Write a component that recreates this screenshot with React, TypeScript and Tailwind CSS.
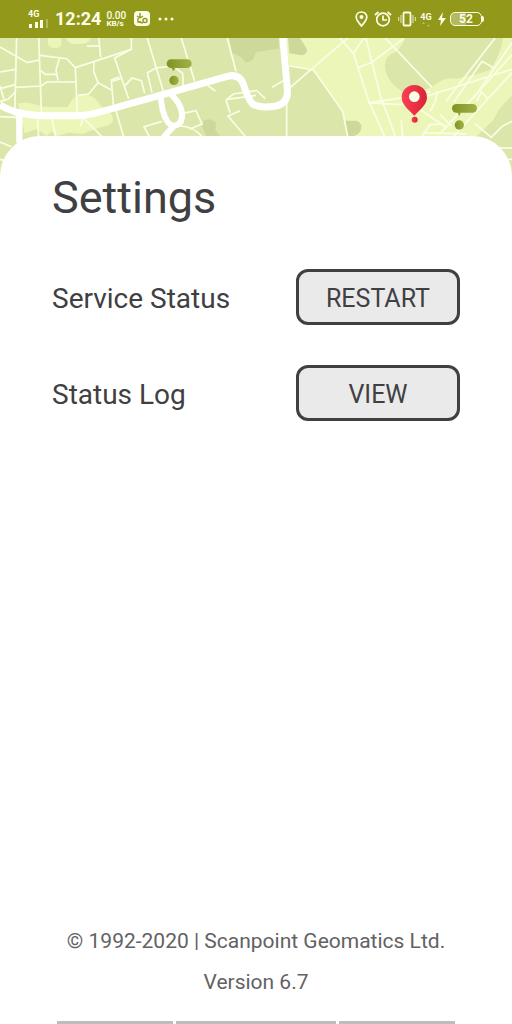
const MINOR_ROADS = [
  'M0 33 L82 80 L118 72', 'M50 0 L44 240', 'M116 0 L124 228', 'M0 108 L46 100', 'M48 154 L124 150 L140 138 L226 138',
  'M0 158 L46 146', 'M0 196 L24 190 L46 168', 'M0 150 L12 190', 'M120 58 L200 68 L226 95 L232 232', 'M178 68 L168 102 L174 134',
  'M122 104 L136 115 L168 115', 'M226 95 L394 40', 'M296 0 L302 64', 'M260 30 L298 30', 'M394 0 V40 L344 66 L386 188',
  'M282 76 L281 106 L294 140 L334 162', 'M294 140 L266 174 L234 178', 'M358 122 L334 132 L340 206', 'M336 136 L362 128',
  'M376 148 L396 126 L424 134 L434 172', 'M440 0 L490 166', 'M456 170 L442 110 L468 96 L520 90 L548 112 L550 150',
  'M542 0 L584 136', 'M620 146 L646 165', 'M680 0 L708 106', 'M0 242 L50 244', 'M112 238 L116 306', 'M154 240 L168 306',
  'M244 240 L310 306', 'M242 270 L248 246', 'M346 218 L372 306', 'M450 306 L432 272 L486 256', 'M550 232 L588 224 L606 264 L568 280',
  'M540 270 Q580 270 608 304', 'M0 318 L34 332', 'M0 370 L16 374', 'M768 164 L700 174 L678 192 L690 230',
  'M682 190 L768 178', 'M720 224 L684 240 L740 306', 'M768 162 L796 188', 'M816 154 L850 134', 'M864 160 L1050 0',
  'M868 90 L940 102', 'M940 102 L1028 226 L1044 306', 'M860 200 L860 306', 'M1014 0 L1060 52 L1092 6', 'M1060 52 L1106 194 L1156 306',
  'M1096 0 L1142 182 L1188 306', 'M1076 94 L1114 80 L1210 8', 'M1104 200 L1200 206 L1536 100', 'M1150 0 L1296 154',
  'M1110 200 L1230 182 L1290 166', 'M1204 254 L1208 306', 'M1260 220 L1340 276', 'M1262 306 L1290 266 L1330 264',
  'M1290 226 L1306 196 L1312 166', 'M1338 196 L1490 0', 'M1362 198 L1446 76 L1486 98', 'M1420 188 L1536 20', 'M1318 296 L1536 56',
  'M1356 306 L1536 110', 'M1430 196 L1444 168 L1462 186', 'M1270 290 L1400 294', 'M1424 262 L1474 304 L1508 270 L1536 256',
  'M1320 236 L1354 270', 'M1490 336 H1536', 'M1520 370 H1536',
];

const MAJOR_ROADS = [
  { d: 'M0 207 Q50 239 140 239 H228 Q260 239 300 228 L480 178 L682 121 Q718 112 730 144 Q744 190 758 204 Q780 218 828 210 Q866 202 862 160 L848 0', width: 21 },
  { d: 'M58 228 V320', width: 19 },
  { d: 'M482 174 Q484 230 502 256 Q520 282 542 258 Q554 230 532 196 L510 170 M520 272 L490 304', width: 18 },
];

function MapBanner() {
  return (
    <svg className="block h-[148px] w-full" viewBox="0 6 1536 444" preserveAspectRatio="xMidYMin slice" aria-hidden="true">
      <defs>
        <linearGradient id="olive">
          <stop offset="0" stopColor="#829126" />
          <stop offset="1" stopColor="#a1b245" />
        </linearGradient>
        <linearGradient id="red">
          <stop offset="0" stopColor="#fb4052" />
          <stop offset="1" stopColor="#da2438" />
        </linearGradient>
      </defs>
      <rect width="1536" height="450" fill="#dbe6aa" />
      <g fill="#edf6b9">
        <path d="M144 0 H184 V26 Q180 36 164 36 Q148 36 144 24Z" />
        <path d="M196 0 H274 Q270 24 240 24 H222 Q200 22 196 0Z" />
        <path d="M54 202 Q90 196 126 212 L202 214 Q218 180 242 176 Q276 174 292 194 Q310 224 332 232 Q348 252 328 268 Q280 278 248 294 L206 290 L170 300 L154 286 L140 300 L110 278 L74 292Z" />
        <path d="M856 0 H1536 V180 Q1496 214 1480 252 L1420 310 H1044 L1028 226 L940 102 L868 90Z" />
      </g>
      <path d="M1216 6 H1510 Q1500 60 1470 102 Q1410 122 1370 128 Q1330 120 1296 154 Q1250 170 1204 164 Q1164 140 1156 102 Q1150 68 1174 54 Q1200 46 1216 6Z" fill="#dbe6aa" />
      <g fill="#ccd99b">
        <path d="M688 6 H836 V38 L768 48 L758 72 L738 80 L722 62 L696 50Z" />
        <path d="M864 6 H900 L920 38 Q924 54 906 58 L868 52Z" />
        <path d="M1036 254 H1070 Q1090 262 1082 284 Q1070 304 1042 300Z" />
        <path d="M606 274 L612 252 L632 250 L648 260 L646 282 L660 300 H620Z" />
      </g>
      <g fill="none" stroke="#fbfee6" strokeWidth="5">
        {MINOR_ROADS.map(d => <path key={d} d={d} />)}
      </g>
      <g fill="none" stroke="#fff" strokeLinejoin="round">
        {MAJOR_ROADS.map(r => <path key={r.d} d={r.d} strokeWidth={r.width} />)}
      </g>
      <g fill="url(#olive)">
        <rect x="500" y="70" width="75" height="26" rx="13" />
        <path d="M514 94 L520 106 L528 94Z" />
        <circle cx="522" cy="133" r="14" />
        <rect x="1356" y="204" width="75" height="26" rx="13" />
        <path d="M1373 228 L1377 241 L1384 228Z" />
        <circle cx="1378" cy="267" r="14" />
      </g>
      <circle cx="1243" cy="182" r="18" fill="#fbfee6" />
      <g fill="url(#red)">
        <path fillRule="evenodd" d="M1243 147 C1220 147 1205 164 1205 184 C1205 207 1226 221 1243 239 C1260 221 1281 207 1281 184 C1281 164 1266 147 1243 147Z M1243 166 A16 16 0 1 1 1243 198 A16 16 0 1 1 1243 166Z" />
        <circle cx="1244" cy="251" r="9" />
      </g>
    </svg>
  );
}

function StatusBar() {
  return (
    <header className="flex h-[38px] items-center justify-between bg-[#92991a] px-7 text-[#fdffe8]">
      <div className="flex items-center">
        <div className="flex w-5 flex-col">
          <span className="text-[9px] leading-[9px] font-bold">4G</span>
          <svg width="20" height="9" viewBox="0 0 20 9" fill="currentColor" aria-hidden="true">
            <path d="M1 5h3v4H1zM7 3h3v6H7zM12 1h3v8h-3z" />
            <path d="M18 0h2v9h-2z" opacity=".3" />
          </svg>
        </div>
        <span className="ml-[7px] text-[18px] leading-5 font-bold">12:24</span>
        <div className="ml-[5px] flex w-5 flex-col font-medium">
          <span className="text-[10px] leading-[9px]">0.00</span>
          <span className="text-[8px] leading-[8px] font-bold">KB/s</span>
        </div>
        <svg className="ml-2" width="16" height="16" viewBox="0 0 16 16" aria-hidden="true">
          <rect width="16" height="15" rx="4" fill="currentColor" />
          <g fill="none" stroke="#92991a" strokeWidth="1.4">
            <path d="M6 2v4M3 5l3 2 3-2M4 7v4h3" />
            <circle cx="11" cy="9.5" r="2" />
            <path d="M5 11l4 1" />
          </g>
        </svg>
        <svg className="ml-2" width="16" height="4" viewBox="0 0 16 4" fill="currentColor" aria-hidden="true">
          <circle cx="2" cy="2" r="1.5" /><circle cx="8" cy="2" r="1.5" /><circle cx="14" cy="2" r="1.5" />
        </svg>
      </div>
      <div className="flex items-center">
        <svg width="13" height="16" viewBox="0 0 13 16" aria-hidden="true">
          <path d="M6.5 1C3.5 1 1.2 3.2 1.2 6c0 3.5 3.3 6.2 5.3 9 2-2.8 5.3-5.5 5.3-9 0-2.8-2.3-5-5.3-5Z" fill="none" stroke="currentColor" strokeWidth="1.7" />
          <circle cx="6.5" cy="6" r="2" fill="currentColor" />
        </svg>
        <svg className="ml-1.5" width="18" height="16" viewBox="0 0 18 16" fill="none" stroke="currentColor" strokeWidth="1.7" aria-hidden="true">
          <circle cx="9" cy="8.5" r="6.3" />
          <path d="M9 4.5V9h4M1 4l3.5-3M17 4l-3.5-3" />
        </svg>
        <svg className="ml-1.5" width="18" height="16" viewBox="0 0 18 16" fill="none" stroke="currentColor" aria-hidden="true">
          <rect x="5.5" y="1.5" width="7" height="13" rx="1" strokeWidth="1.8" />
          <path d="M3 4v8M.7 6v4M15 4v8M17.3 6v4" opacity=".8" />
        </svg>
        <div className="ml-1 flex w-3 flex-col items-center">
          <span className="text-[9px] leading-[10px] font-bold">4G</span>
          <svg width="8" height="5" viewBox="0 0 8 5" fill="currentColor" opacity=".4" aria-hidden="true">
            <path d="M0 2l1.500-2L3 2zM5 3h3L6.500 5z" />
          </svg>
        </div>
        <svg className="ml-1.5" width="8" height="14" viewBox="0 0 8 14" fill="currentColor" aria-hidden="true">
          <path d="M5 0 0 8h3l-1 6 6-8H4z" />
        </svg>
        <div className="ml-1 flex items-center">
          <span className="flex h-[14px] w-8 items-center justify-center rounded-[5px] border border-current bg-linear-to-r from-[#b3b95c] from-50% to-transparent to-50% text-[12px] leading-3 font-bold">
            52
          </span>
          <span className="h-1.5 w-0.5 rounded-r bg-current" />
        </div>
      </div>
    </header>
  );
}

const ROWS = [
  { id: 'service-status', label: 'Service Status', action: 'RESTART' },
  { id: 'status-log', label: 'Status Log', action: 'VIEW' },
];

export default function App() {
  return (
    <div className="flex min-h-screen flex-col overflow-hidden bg-white font-[Roboto,sans-serif] text-[#404042]">
      <StatusBar />
      <MapBanner />
      <main className="relative -mt-[50px] flex flex-1 flex-col rounded-t-[40px] bg-white pt-9">
        <h1 className="px-[52px] text-[45px] leading-[52px]">Settings</h1>
        <div className="mt-[45px] flex flex-col gap-10 px-[52px]">
          {ROWS.map(row => (
            <div key={row.id} className="flex items-center justify-between">
              <span id={row.id} className="pt-1 text-[28px] leading-8">{row.label}</span>
              <button
                type="button"
                aria-describedby={row.id}
                className="h-14 w-[164px] rounded-xl border-3 border-[#404042] bg-[#eaeaea] pt-1 text-[25px]"
              >
                {row.action}
              </button>
            </div>
          ))}
        </div>
        <footer className="mt-auto flex flex-col items-center text-[#626264]">
          <p className="text-[21px] leading-6">© 1992-2020 | Scanpoint Geomatics Ltd.</p>
          <p className="mt-[17px] text-[21px] leading-6">Version 6.7</p>
          <div className="mt-[27px] flex w-full gap-[3px] px-[57px]">
            <span className="h-[3px] flex-[116] bg-[#bdbdbd]" />
            <span className="h-[3px] flex-[160] bg-[#bdbdbd]" />
            <span className="h-[3px] flex-[116] bg-[#bdbdbd]" />
          </div>
        </footer>
      </main>
    </div>
  );
}
